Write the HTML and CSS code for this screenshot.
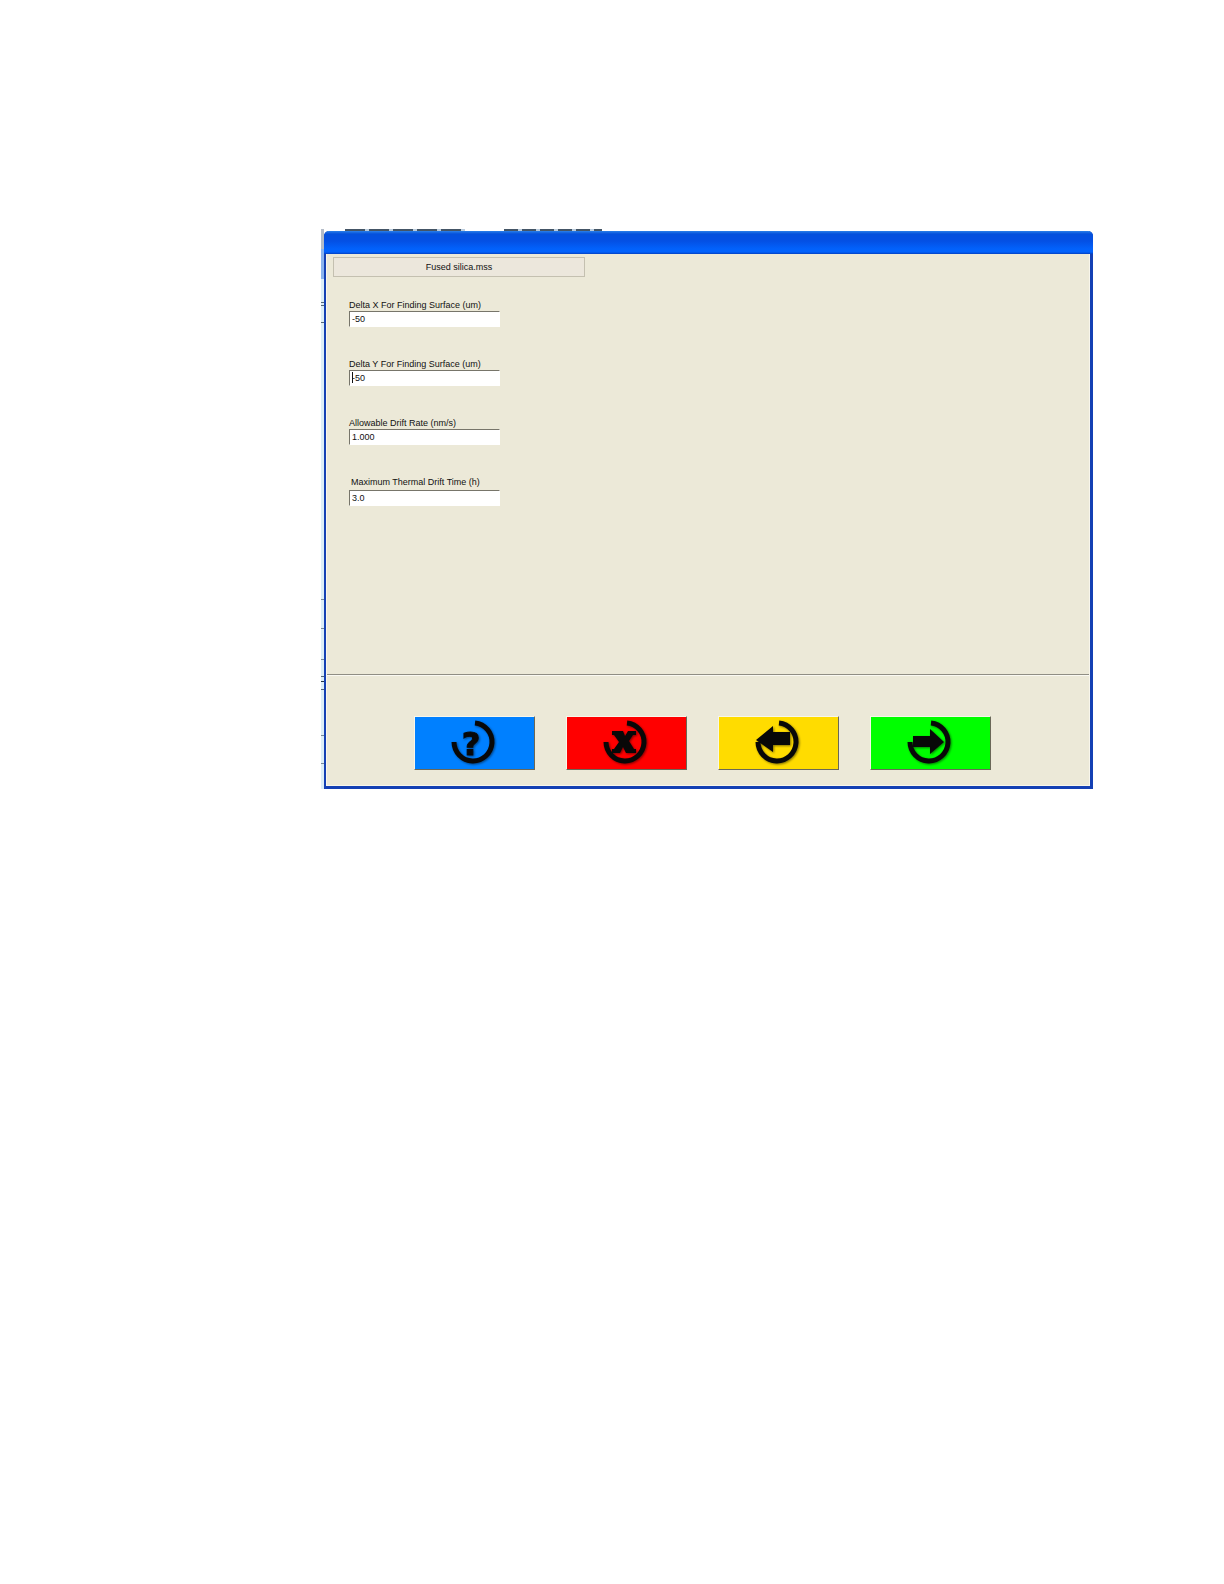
FILE: index.html
```
<!DOCTYPE html>
<html lang="en">
<head>
<meta charset="UTF-8">
<meta name="viewport" content="width=device-width, initial-scale=1.0">
<title>Fused silica.mss</title>
<link rel="stylesheet" href="styles.css">
</head>
<body>
<div class="backdrop">
    <div class="window">
        <div class="titlebar"></div>
        <form class="content">
            <div class="file-name">Fused silica.mss</div>
            <div class="fields">
                <div class="form-group">
                    <label for="deltaX">Delta X For Finding Surface (um)</label>
                    <input type="text" id="deltaX" name="deltaX" value="-50">
                </div>
                <div class="form-group">
                    <label for="deltaY">Delta Y For Finding Surface (um)</label>
                    <input type="text" id="deltaY" name="deltaY" class="active" value="-50">
                </div>
                <div class="form-group">
                    <label for="driftRate">Allowable Drift Rate (nm/s)</label>
                    <input type="text" id="driftRate" name="driftRate" value="1.000">
                </div>
                <div class="form-group last">
                    <label for="driftTime">Maximum Thermal Drift Time (h)</label>
                    <input type="text" id="driftTime" name="driftTime" value="3.0">
                </div>
            </div>
            <div class="buttons">
                <button type="button" class="help" aria-label="Help">
                    <svg viewBox="0 0 48 48">
                        <path class="ring" d="M25 5 A19 19 0 1 1 4 24"/>
                        <text x="21" y="37">?</text>
                    </svg>
                </button>
                <button type="button" class="cancel" aria-label="Cancel">
                    <svg viewBox="0 0 48 48">
                        <path class="ring" d="M25 5 A19 19 0 1 1 4 24"/>
                        <path d="M10 13h11l2 5 3-5h8v4h-3l-4 6 5 8h2v4H24l-3-6-3 6h-8v-4h2l5-7-5-7h-2z"/>
                    </svg>
                </button>
                <button type="button" class="back" aria-label="Back">
                    <svg viewBox="0 0 48 48">
                        <path class="ring" d="M25 5 A19 19 0 1 1 4 24"/>
                        <path d="M2 22 L19 8 V14 H36 V27 H19 V34 Z"/>
                    </svg>
                </button>
                <button type="button" class="next" aria-label="Next">
                    <svg viewBox="0 0 48 48">
                        <path class="ring" d="M25 5 A19 19 0 1 1 4 24"/>
                        <path d="M7 18 H24 V11 L38 24 L24 36 V29 H7 Z"/>
                    </svg>
                </button>
            </div>
        </form>
    </div>
</div>
</body>
</html>
```
FILE: styles.css
```
* {
    box-sizing: border-box;
}

body {
    font-family: "Liberation Sans", Arial, sans-serif;
    font-size: 9px;
    line-height: 12px;
    color: #111;
    background-color: #fff;
    margin: 0;
    padding: 229px 131px 0 321px;
}

/* sliver of the screen behind the window */
.backdrop {
    padding: 2px 0 0 3px;
    background:
        repeating-linear-gradient(90deg, #456 0 20px, #bcd 20px 24px) 24px 0 / 120px 2px no-repeat,
        repeating-linear-gradient(90deg, #456 0 14px, #bcd 14px 18px) 183px 0 / 98px 2px no-repeat,
        linear-gradient(#567, #567) 0 73px / 3px 1px no-repeat,
        linear-gradient(#567, #567) 0 76px / 3px 1px no-repeat,
        linear-gradient(#567, #567) 0 93px / 3px 1px no-repeat,
        linear-gradient(#789, #789) 0 370px / 3px 1px no-repeat,
        linear-gradient(#789, #789) 0 399px / 3px 1px no-repeat,
        linear-gradient(#789, #789) 0 430px / 3px 1px no-repeat,
        linear-gradient(#567, #567) 0 447px / 3px 1px no-repeat,
        linear-gradient(#234, #234) 0 452px / 3px 1px no-repeat,
        linear-gradient(#567, #567) 0 460px / 3px 1px no-repeat,
        linear-gradient(#789, #789) 0 506px / 3px 1px no-repeat,
        linear-gradient(#789, #789) 0 534px / 3px 1px no-repeat,
        linear-gradient(#b4bcc8 0 20px, #8bb4ee 20px 50px, #dceef8 50px) 0 0 / 3px 100% no-repeat;
}

.window {
    border: solid #1440b4;
    border-width: 0 3px 3px 2px;
    border-radius: 5px 5px 0 0;
    background-color: #ece9d8;
}

.titlebar {
    height: 23px;
    margin: 0 -3px 0 -2px;
    border-radius: 5px 5px 0 0;
    background: linear-gradient(#2a80e8 0, #0450dc 3px, #0450e4 10px, #0262fc 18px, #0262fc 21px, #0440c0 23px);
}

.content {
    padding-top: 3px;
    border: 1px solid #f8f6ec;
    border-top: 0;
}

.file-name {
    width: 252px;
    margin-left: 6px;
    padding: 3px 0;
    border: 1px solid #c4c0b0;
    text-align: center;
    background-color: #ece7dc;
}

.fields {
    padding: 22px 22px 0;
    min-height: 398px;
    border-bottom: 1px solid #908e84;
}

.form-group {
    width: 151px;
    margin-bottom: 31px;
}

label {
    display: block;
}

.last label {
    padding: 0 0 2px 2px;
}

input {
    display: block;
    width: 100%;
    height: 16px;
    padding: 0 2px;
    border: 1px solid #fff;
    border-top-color: #77756a;
    border-left-color: #77756a;
    font: inherit;
    color: #111;
    background-color: #fff;
}

/* text cursor in the current field */
.active {
    background: linear-gradient(#111, #111) 2px 1px / 1px 11px no-repeat #fff;
}

.buttons {
    display: flex;
    justify-content: center;
    gap: 31px;
    padding: 40px 12px 15px 0;
    border-top: 1px solid #faf9f2;
}

button {
    display: flex;
    justify-content: center;
    width: 121px;
    height: 54px;
    padding: 1px 0;
    border: 1px solid #f8f6ea;
    border-right-color: #6a6858;
    border-bottom-color: #6a6858;
    cursor: pointer;
}

.help {
    background-color: #0080ff;
}

.cancel {
    background-color: #ff0000;
}

.back {
    background-color: #ffdc00;
}

.next {
    background-color: #00ff00;
}

svg {
    width: 48px;
    height: 48px;
    fill: #080808;
    filter: drop-shadow(1px 1px 1px rgba(0, 0, 0, 0.5));
}

svg text {
    font-family: "DejaVu Sans", sans-serif;
    font-size: 32px;
    font-weight: bold;
    text-anchor: middle;
    stroke: #080808;
    stroke-width: 1;
}

.ring {
    fill: none;
    stroke: #080808;
    stroke-width: 5;
}
```
